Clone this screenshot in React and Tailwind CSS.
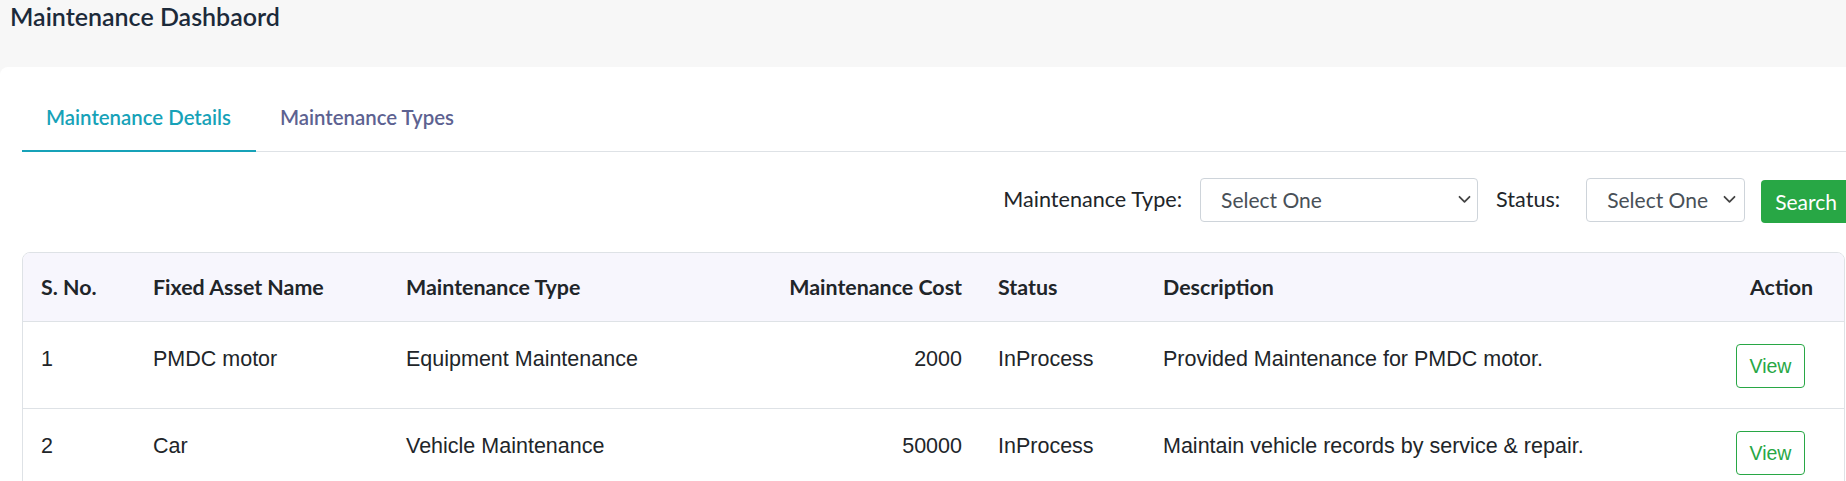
import React from "react";

const lato = { fontFamily: "Lato, 'Open Sans', sans-serif" };

function Chevron() {
  return (
    <svg width="13" height="9" viewBox="0 0 13 9" fill="none" className="shrink-0">
      <path d="M1.5 1.8 L6.5 6.8 L11.5 1.8" stroke="#444" strokeWidth="1.8" strokeLinecap="round" strokeLinejoin="round" />
    </svg>
  );
}

function FakeSelect({ width, padRight }) {
  return (
    <div
      className={`flex h-[44px] items-center justify-between rounded-[4px] border border-[#ced4da] bg-white pl-[20px] ${width} ${padRight}`}
    >
      <span className="text-[21px] text-[#495057]">Select One</span>
      <Chevron />
    </div>
  );
}

const rows = [
  {
    no: "1",
    name: "PMDC motor",
    type: "Equipment Maintenance",
    cost: "2000",
    status: "InProcess",
    desc: "Provided Maintenance for PMDC motor.",
  },
  {
    no: "2",
    name: "Car",
    type: "Vehicle Maintenance",
    cost: "50000",
    status: "InProcess",
    desc: "Maintain vehicle records by service & repair.",
  },
];

const cols = "grid grid-cols-[112px_253px_194px_398px_165px_437px_1fr] pl-[18px] pr-[31px] whitespace-nowrap";

export default function App() {
  return (
    <div className="h-[481px] w-full overflow-hidden bg-[#f7f7f7]" style={lato}>
      {/* page title */}
      <div className="h-[67px] pl-[10px] pt-[1px]">
        <h1 className="text-[25px] font-semibold leading-[30px] text-[#1c2a3a]">Maintenance Dashbaord</h1>
      </div>

      {/* main card */}
      <div className="rounded-tl-[8px] bg-white pt-[19px]">
        {/* tabs */}
        <div className="ml-[22px] flex border-b border-[#dee2e6]">
          <div className="-mb-px border-b-[2px] border-[#17a2b8] pl-[24px] pr-[25px] pt-[19px] pb-[19px]">
            <span className="text-[20.4px] font-semibold leading-[24px] text-[#17a2b8]">Maintenance Details</span>
          </div>
          <div className="pl-[24px] pr-[25px] pt-[19px] pb-[19px]">
            <span className="text-[20.4px] font-semibold leading-[24px] text-[#5d6291]">Maintenance Types</span>
          </div>
        </div>

        {/* filters */}
        <div className="mt-[24px] flex items-center justify-end">
          <span className="mr-[18px] text-[21.6px] text-[#212529]">Maintenance Type:</span>
          <FakeSelect width="w-[278px]" padRight="pr-[6px]" />
          <span className="ml-[18px] mr-[26px] text-[21.6px] text-[#212529]">Status:</span>
          <FakeSelect width="w-[159px]" padRight="pr-[8px]" />
          <button className="-mr-[5px] ml-[16px] mt-[4px] h-[43px] rounded-[4px] bg-[#28a745] px-[14px] text-[21px] text-white">
            Search
          </button>
        </div>

        {/* table */}
        <div className="ml-[22px] mr-[1px] mt-[29px] overflow-hidden rounded-t-[8px] border border-[#dee2e6]">
          <div className={`${cols} h-[69px] items-center border-b border-[#dee2e6] bg-[#f7f6fd] text-[21.4px] font-bold text-[#212529]`}>
            <div>S. No.</div>
            <div>Fixed Asset Name</div>
            <div>Maintenance Type</div>
            <div className="pr-[36px] text-right">Maintenance Cost</div>
            <div>Status</div>
            <div>Description</div>
            <div className="text-right">Action</div>
          </div>
          {rows.map((r) => (
            <div
              key={r.no}
              className={`${cols} h-[87px] items-start border-b border-[#dee2e6] pt-[22px] text-[21.5px] leading-[30px] text-[#212529]`}
              style={{ fontFamily: "'Liberation Sans', Arial, sans-serif" }}
            >
              <div>{r.no}</div>
              <div>{r.name}</div>
              <div>{r.type}</div>
              <div className="pr-[36px] text-right">{r.cost}</div>
              <div>{r.status}</div>
              <div>{r.desc}</div>
              <div className="flex justify-end">
                <button className="mr-[8px] h-[44px] w-[69px] rounded-[4px] border border-[#28a745] text-[19.5px] text-[#28a745]">
                  View
                </button>
              </div>
            </div>
          ))}
        </div>
      </div>
    </div>
  );
}
